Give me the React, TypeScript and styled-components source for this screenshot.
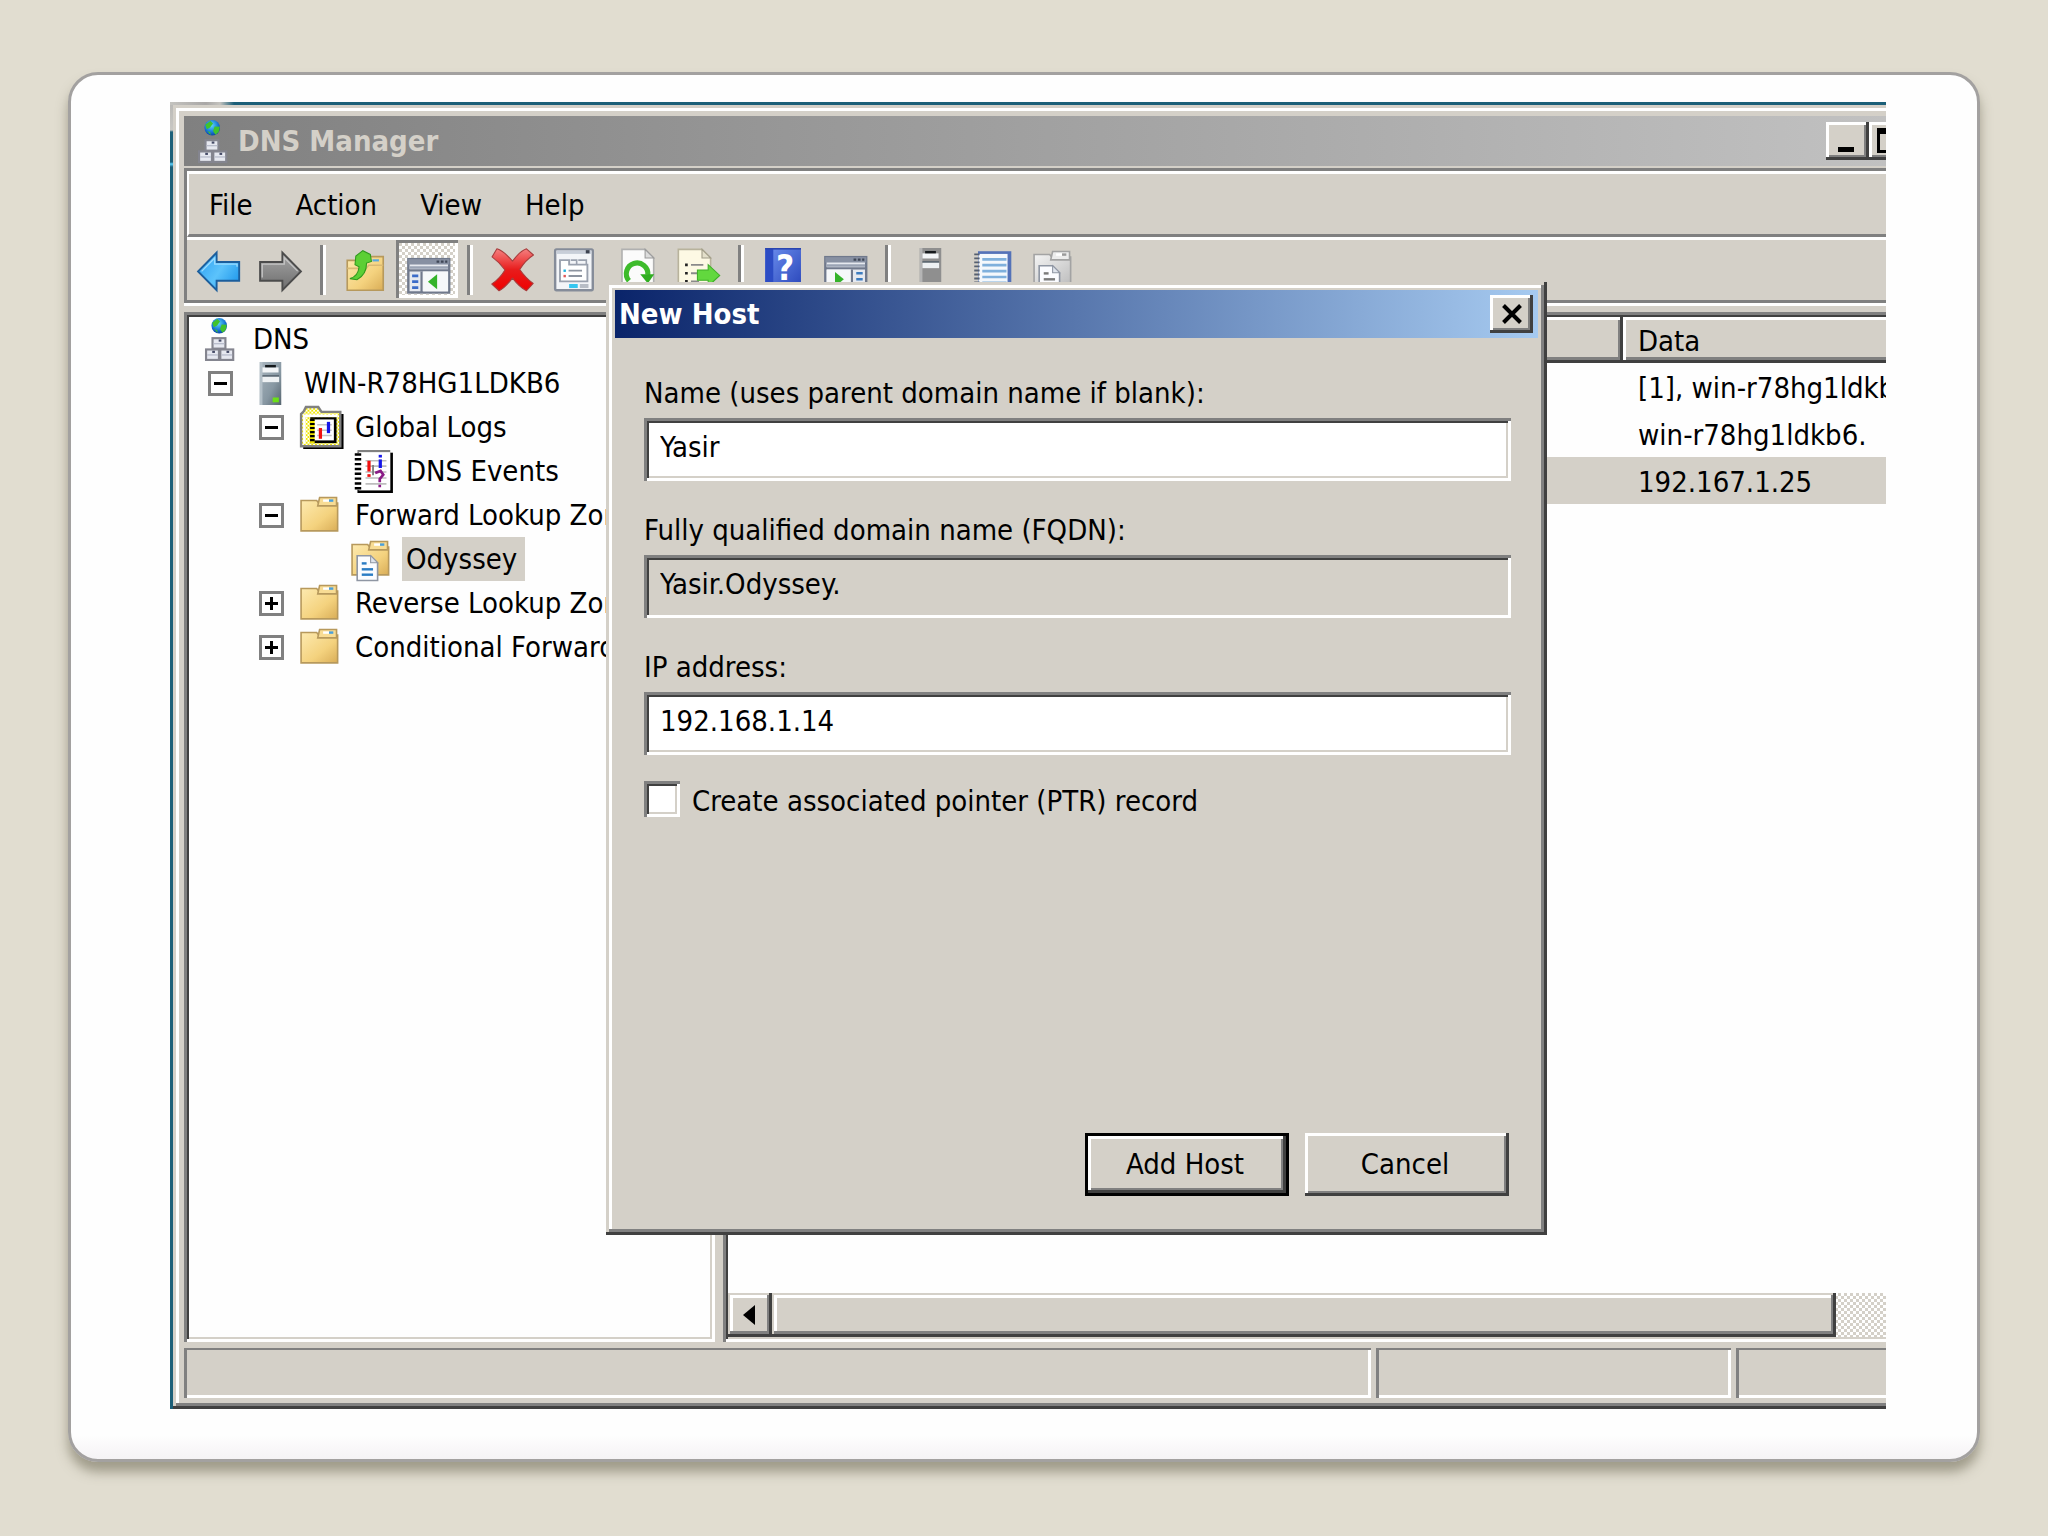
import React, { useState } from "react";
import styled, { createGlobalStyle, css } from "styled-components";

const face = "#d4d0c8";
const shade = "#808080";
const dark = "#404040";
const light = "#ffffff";

const GlobalStyle = createGlobalStyle`
  *, *::before, *::after { box-sizing: border-box; }
  html, body { margin: 0; padding: 0; background: #e1ddd0; }
  body, button, input, table {
    font-family: "DejaVu Sans Condensed", "DejaVu Sans", Tahoma, sans-serif;
    font-stretch: condensed;
    font-size: 29px;
    color: #000;
  }
  button, input { margin: 0; padding: 0; border: 0; border-radius: 0; }
`;

const raised = css`
  background: ${face};
  box-shadow: inset -3px -3px ${dark}, inset 3px 3px ${light}, inset -5px -5px ${shade};
`;

const sunken = css`
  box-shadow: inset 3px 3px ${shade}, inset -3px -3px ${light}, inset 5px 5px ${dark}, inset -5px -5px ${face};
`;

/* ---------- slide ---------- */

const Slide = styled.main`
  display: flex;
  min-height: 100vh;
  padding: 72px 68px 74px;
  background: #e1ddd0;
`;

const Card = styled.section`
  display: flex;
  flex: 1;
  min-width: 0;
  padding: 27px 91px 50px 99px;
  border: 3px solid #a3a1a0;
  border-radius: 30px;
  background: linear-gradient(to top, #f5f3f5 0, #fefefe 24px);
  box-shadow: 0 10px 12px rgba(95, 92, 70, 0.5);
`;

const Screen = styled.div`
  position: relative;
  display: flex;
  flex: 1;
  min-width: 0;
  overflow: hidden;
  padding: 3px 0 0 3px;
  background:
    linear-gradient(to right, #c4c3bf 0, #a9a7a6 36px, #c4c3bf 50px, transparent 64px) 0 0 / 64px 3px no-repeat,
    linear-gradient(to bottom, #b9b8b5 0, #c9c8c4 28px, #1c5f78 30px, #1c5f78 60px, #5fd4ff 62px, #1c5f78 65px) 0 0 / 3px 66px no-repeat,
    #1c5f78;
`;

/* ---------- main window ---------- */

const Window = styled.div`
  display: flex;
  flex: 1;
  flex-direction: column;
  min-width: 0;
  padding: 11px 0 11px 11px;
  background: ${face};
  box-shadow: inset 0 -3px ${dark}, inset 3px 3px ${face}, inset 0 -6px ${shade}, inset 6px 6px ${light};
`;

const TitleBar = styled.header`
  display: flex;
  align-items: center;
  height: 50px;
  padding-left: 7px;
  background: linear-gradient(to right, #808080, #c1c1c1);
`;

const WindowTitle = styled.h1`
  flex: 1;
  margin: 0 0 0 4px;
  font-size: 29px;
  line-height: 50px;
  font-weight: bold;
  color: ${face};
`;

const CaptionButtons = styled.div`
  display: flex;
  flex: none;
  width: 60px;
  overflow: hidden;
`;

const CaptionButton = styled.button`
  ${raised}
  display: flex;
  flex: none;
  align-items: center;
  justify-content: center;
  width: 43px;
  height: 38px;
`;

const Bands = styled.div`
  display: flex;
  flex-direction: column;
  margin-top: 2px;
  border-top: 3px solid ${shade};
  border-left: 3px solid ${shade};
`;

const MenuBar = styled.nav`
  display: flex;
  gap: 43px;
  height: 66px;
  padding-left: 20px;
  border-top: 3px solid ${light};
  border-left: 2px solid ${light};
  border-bottom: 3px solid ${shade};
`;

const MenuItem = styled.button`
  background: none;
  line-height: 62px;
`;

const ToolBar = styled.div`
  display: flex;
  height: 66px;
  border-top: 3px solid ${light};
  border-bottom: 3px solid ${shade};
`;

const ToolButton = styled.button<{ $pressed?: boolean }>`
  display: flex;
  flex: none;
  justify-content: center;
  width: 62px;
  height: 58px;
  padding-top: 8px;
  background: none;
  ${(p) =>
    p.$pressed &&
    css`
      padding: 10px 0 0 3px;
      background: conic-gradient(#fff 25%, ${face} 0 50%, #fff 0 75%, ${face} 0) 0 0 / 6px 6px;
      box-shadow: inset 3px 3px ${shade}, inset -3px -3px ${light};
    `}
`;

const ToolSeparator = styled.span`
  flex: none;
  width: 6px;
  height: 50px;
  margin: 5px 8px 0 9px;
  border-left: 3px solid ${shade};
  border-right: 3px solid ${light};
`;

const Panes = styled.div`
  display: grid;
  flex: 1;
  grid-template-columns: 531px minmax(0, 1fr);
  gap: 8px;
  min-height: 0;
  padding: 6px 0;
  border-top: 3px solid ${light};
`;

const TreePane = styled.div`
  ${sunken}
  padding: 5px;
  background-color: #fefefe;
`;

const TreeList = styled.ul`
  margin: 0;
  padding: 0;
  list-style: none;
`;

const TreeRow = styled.li<{ $level: number }>`
  display: flex;
  align-items: center;
  height: 44px;
  padding-left: ${(p) => (p.$level === 0 ? 9 : 51 * p.$level - 32)}px;
  white-space: nowrap;
`;

const ExpanderSlot = styled.span`
  display: flex;
  flex: none;
  width: 41px;
`;

const Expander = styled.button`
  display: flex;
  align-items: center;
  justify-content: center;
  width: 25px;
  height: 25px;
  border: 3px solid ${shade};
  background: #fff;
`;

const TreeLabel = styled.span<{ $selected?: boolean }>`
  margin-left: 8px;
  padding: 0 8px 0 4px;
  line-height: 44px;
  background: ${(p) => (p.$selected ? face : "transparent")};
`;

const ListPane = styled.div`
  display: flex;
  flex-direction: column;
  min-width: 0;
  padding: 5px 0 5px 5px;
  overflow: hidden;
  background: #fefefe;
  box-shadow: inset 3px 3px ${shade}, inset 0 -3px ${light}, inset 5px 5px ${dark}, inset 0 -5px ${face};
`;

const RecordTable = styled.table`
  width: 100%;
  table-layout: fixed;
  border-collapse: separate;
  border-spacing: 0;
`;

const HeaderCell = styled.th<{ $last?: boolean }>`
  width: ${(p) => (p.$last ? "263px" : "auto")};
  height: 46px;
  padding: 2px 0 0 15px;
  background: ${face};
  font-weight: normal;
  line-height: 44px;
  text-align: left;
  box-shadow: ${(p) =>
    p.$last
      ? `inset 0 -3px ${dark}, inset 3px 3px ${light}, inset 0 -6px ${shade}`
      : `inset -3px -3px ${dark}, inset 3px 3px ${light}, inset -5px -6px ${shade}`};
`;

const RecordRow = styled.tr<{ $selected?: boolean }>`
  background: ${(p) => (p.$selected ? face : "transparent")};
`;

const RecordCell = styled.td`
  height: 47px;
  padding: 3px 0 0 15px;
  overflow: hidden;
  line-height: 44px;
  white-space: nowrap;
`;

const ScrollBar = styled.div`
  display: flex;
  height: 44px;
  margin-top: auto;
  padding-right: 50px;
  background: conic-gradient(#fff 25%, ${face} 0 50%, #fff 0 75%, ${face} 0) 0 0 / 6px 6px;
`;

const scrollPart = css`
  background: ${face};
  box-shadow: inset -3px -3px ${dark}, inset 2px 2px ${face}, inset -5px -6px ${shade}, inset 5px 5px ${light};
`;

const ScrollButton = styled.button`
  ${scrollPart}
  display: flex;
  flex: none;
  align-items: center;
  justify-content: center;
  width: 44px;
  padding-right: 3px;
`;

const ScrollThumb = styled.div`
  ${scrollPart}
  flex: 1;
`;

const StatusBar = styled.footer`
  display: grid;
  grid-template-columns: minmax(0, 1fr) 355px 150px;
  gap: 5px;
  height: 50px;
`;

const StatusCell = styled.div<{ $open?: boolean }>`
  box-shadow: ${(p) =>
    p.$open
      ? `inset 3px 2px ${shade}, inset 0 -3px ${light}`
      : `inset 3px 2px ${shade}, inset -3px -3px ${light}`};
`;

/* ---------- dialog ---------- */

const Dialog = styled.form`
  position: absolute;
  top: 180px;
  left: 436px;
  display: flex;
  flex-direction: column;
  width: 941px;
  height: 953px;
  padding: 8px 9px;
  background: ${face};
  box-shadow: inset -3px -3px ${dark}, inset 3px 3px ${face}, inset -6px -6px ${shade}, inset 6px 6px ${light};
`;

const DialogTitleBar = styled.header`
  display: flex;
  align-items: center;
  justify-content: space-between;
  height: 48px;
  padding: 0 5px 0 4px;
  background: linear-gradient(to right, #0a246a, #a6caf0);
`;

const DialogTitle = styled.h2`
  margin: 0;
  font-size: 29px;
  line-height: 48px;
  font-weight: bold;
  color: #fff;
`;

const DialogBody = styled.div`
  display: flex;
  flex: 1;
  flex-direction: column;
  gap: 31px;
  padding: 37px 27px 31px 29px;
`;

const Field = styled.div`
  display: flex;
  flex-direction: column;
  gap: 7px;
`;

const FieldLabel = styled.label`
  line-height: 36px;
`;

const TextBox = styled.input`
  ${sunken}
  width: 100%;
  height: 63px;
  padding: 0 16px 6px;
  background: #fff;
  outline: none;

  &:read-only {
    background: ${face};
  }
`;

const CheckRow = styled.div`
  display: flex;
  gap: 12px;
  height: 40px;
  margin-top: -5px;
`;

const CheckBox = styled.input`
  ${sunken}
  flex: none;
  width: 36px;
  height: 36px;
  appearance: none;
  background: #fff;

  &:checked {
    background: linear-gradient(#000, #000) center / 14px 14px no-repeat #fff;
  }
`;

const CheckLabel = styled.label`
  line-height: 40px;
`;

const DialogButtons = styled.div`
  display: flex;
  justify-content: flex-end;
  gap: 16px;
  margin-top: auto;
  padding-right: 2px;
`;

const PushButton = styled.button<{ $default?: boolean }>`
  ${raised}
  width: 204px;
  height: 63px;
  padding-right: 4px;
  line-height: 63px;
  ${(p) =>
    p.$default &&
    css`
      box-shadow: inset 0 0 0 3px #000, inset -6px -6px ${dark}, inset 6px 6px ${light}, inset -8px -8px ${shade};
    `}
`;

/* ---------- icons, drawn on a 16 unit grid ---------- */

const Glyph = styled.svg`
  display: block;
  flex: none;
  width: 43px;
  height: 43px;
  overflow: visible;
`;

const Icon = ({ children }: { children: React.ReactNode }) => (
  <Glyph viewBox="0 0 16 16" aria-hidden="true">
    {children}
  </Glyph>
);

const HiddenDefs = styled.svg`
  position: absolute;
`;

const Defs = () => (
  <HiddenDefs width="0" height="0" aria-hidden="true">
    <defs>
      <linearGradient id="folder" x1="0" y1="0" x2="1" y2="1">
        <stop offset="0" stopColor="#fdeab0" />
        <stop offset="0.6" stopColor="#f4d27e" />
        <stop offset="1" stopColor="#d9ad57" />
      </linearGradient>
      <linearGradient id="folderGrey" x1="0" y1="0" x2="1" y2="1">
        <stop offset="0" stopColor="#f4f4f4" />
        <stop offset="1" stopColor="#bdbdbd" />
      </linearGradient>
      <linearGradient id="tower" x1="0" y1="0" x2="1" y2="1">
        <stop offset="0" stopColor="#a9b6bf" />
        <stop offset="0.6" stopColor="#8797a2" />
        <stop offset="1" stopColor="#56656f" />
      </linearGradient>
      <linearGradient id="blueArrow" x1="0" y1="0" x2="1" y2="0.6">
        <stop offset="0" stopColor="#2a9df0" />
        <stop offset="0.6" stopColor="#5cc3fb" />
        <stop offset="1" stopColor="#2a9fee" />
      </linearGradient>
      <linearGradient id="greyArrow" x1="0" y1="0" x2="0" y2="1">
        <stop offset="0" stopColor="#a6a6a6" />
        <stop offset="1" stopColor="#6d6d6d" />
      </linearGradient>
      <linearGradient id="redCross" x1="0" y1="0" x2="0" y2="1">
        <stop offset="0" stopColor="#f58080" />
        <stop offset="0.5" stopColor="#e81c1c" />
        <stop offset="1" stopColor="#f00000" />
      </linearGradient>
      <linearGradient id="book" x1="0" y1="0" x2="1" y2="1">
        <stop offset="0" stopColor="#6f92f0" />
        <stop offset="1" stopColor="#2743b8" />
      </linearGradient>
      <radialGradient id="globe" cx="0.45" cy="0.35" r="0.7">
        <stop offset="0" stopColor="#5fd8f5" />
        <stop offset="0.6" stopColor="#1878d8" />
        <stop offset="1" stopColor="#0a3c9a" />
      </radialGradient>
      <pattern id="yellowDither" width="1.4" height="1.4" patternUnits="userSpaceOnUse">
        <rect width="1.4" height="1.4" fill="#fff" />
        <rect width="0.7" height="0.7" fill="#f0e600" />
        <rect x="0.7" y="0.7" width="0.7" height="0.7" fill="#f0e600" />
      </pattern>
    </defs>
  </HiddenDefs>
);

const CabinetBox = ({ x, y }: { x: number; y: number }) => (
  <g>
    <rect x={x + 0.3} y={y + 0.3} width="4.8" height="3.9" fill="#e6e8f0" stroke="#84858f" strokeWidth="0.8" />
    <rect x={x + 0.7} y={y + 2.1} width="4" height="0.5" fill="#b9bdcc" />
    <rect x={x + 2.6} y={y + 0.8} width="1" height="0.8" fill="#444a66" />
  </g>
);

const DnsIcon = () => (
  <Icon>
    <circle cx="7.9" cy="2.9" r="2.9" fill="url(#globe)" />
    <path d="M5.3 1.8 7.2.4l1 .9-1.1 1.5-1.2.6zM8.8 2.4l1.9.1-.4 2-1.2 1-.9-1.4zM6 4l1.2.6.1 1z" fill="#41c22c" />
    <CabinetBox x={5.1} y={7.2} />
    <CabinetBox x={2.7} y={11.4} />
    <CabinetBox x={8.0} y={11.4} />
  </Icon>
);

const ServerIcon = ({ grey }: { grey?: boolean }) => (
  <Icon>
    <rect x="4" y="0" width="8" height="16" fill={grey ? "#8f8f8f" : "url(#tower)"} />
    <rect x="4" y="0" width="1" height="16" fill={grey ? "#b5b5b5" : "#b4c0c8"} />
    <rect x="5" y="2" width="6" height="1.9" fill="#f3f5f7" />
    <rect x="6" y="1.1" width="4" height="0.9" fill="#15191c" />
    <rect x="5" y="4.9" width="6.2" height="0.6" fill="#55626c" />
    <rect x="5" y="5.5" width="6.2" height="2" fill="#eef1f3" />
    {!grey && <rect x="8.8" y="13.2" width="2.3" height="1.8" fill="#6be016" />}
  </Icon>
);

const FolderShape = ({ grey }: { grey?: boolean }) => (
  <g strokeWidth="0.6" stroke={grey ? "#a3a3a3" : "#b7995c"}>
    <path d="M.4 2.4h5.8l.8 1h7v10.3H.4z" fill={grey ? "url(#folderGrey)" : "url(#folder)"} />
    <path d="M6.6 4.4 7.3 1.3h6.3v3.1z" fill={grey ? "#ececec" : "#f8dc94"} />
    <rect x="8.6" y="2" width="2.2" height="0.9" fill="#fff" stroke="none" />
    <rect x="10.8" y="2" width="1.6" height="0.9" fill={grey ? "#9a9a9a" : "#4aa0dc"} stroke="none" />
  </g>
);

const FolderIcon = () => (
  <Icon>
    <FolderShape />
  </Icon>
);

const ZoneIcon = ({ grey }: { grey?: boolean }) => {
  const ink = grey ? "#7a7a7a" : "#2b7cc4";
  return (
    <Icon>
      <FolderShape grey={grey} />
      <path d="M2.3 6.6h5l2.6 2.6v6.6H2.3z" fill="#fbfcff" stroke="#8f96a3" strokeWidth="0.6" />
      <path d="M7.3 6.6v2.6h2.6z" fill="#dfe4ec" stroke="#8f96a3" strokeWidth="0.4" />
      <rect x="4" y="9" width="1.8" height="0.9" fill={ink} />
      <rect x="4" y="11.2" width="4.2" height="0.9" fill={ink} />
      <rect x="4" y="13.2" width="4.2" height="0.9" fill={ink} />
    </Icon>
  );
};

const GlobalLogsIcon = () => (
  <Icon>
    <path d="M1.2 15.2h14V3h1v13H1.2z" fill="#000" />
    <path d="M.4 15V3l1-1 .8-1.6h4.6L8 2.2h7V15z" fill="url(#yellowDither)" stroke="#808080" strokeWidth="0.9" />
    <path d="M1.6 14V3.6h12.4" fill="none" stroke="#fff" strokeWidth="0.9" />
    <rect x="3.8" y="4.2" width="9.8" height="9.6" fill="#000" />
    <rect x="5" y="5" width="7.6" height="7.8" fill="#fff" />
    <path d="M4.6 4.8v9" stroke="#f0e600" strokeWidth="1.7" />
    <path d="M4.6 4.8v9" stroke="#000" strokeWidth="1.7" strokeDasharray="0.8 0.7" />
    <path d="M6.4 7h5.4M6.4 9h5.4M6.4 11h5.4" stroke="#c4c4c4" strokeWidth="0.6" />
    <rect x="7" y="8.2" width="1.2" height="4" fill="#f01010" />
    <rect x="10" y="5.9" width="1.2" height="4.2" fill="#1616e8" />
  </Icon>
);

const DnsEventsIcon = () => (
  <Icon>
    <rect x="2.4" y="1" width="13.2" height="15" fill="#000" />
    <rect x="2.4" y="0" width="12.2" height="15" fill="#808080" />
    <rect x="3" y="0.8" width="11.6" height="14.2" fill="#fff" />
    <path d="M2.6 1.2v13.6" stroke="#fff" strokeWidth="2.4" />
    <path d="M2.6 1.2v13.6" stroke="#000" strokeWidth="2.4" strokeDasharray="0.9 0.9" />
    <path d="M5.4 4h7.8M5.4 6h7.8M5.4 8.2h7.8M5.4 10.4h7.8M5.4 12.6h7.8" stroke="#bdbdbd" strokeWidth="0.6" />
    <rect x="6.1" y="4" width="1.2" height="4" fill="#f01010" />
    <rect x="6.1" y="9" width="1.2" height="1" fill="#f01010" />
    <path d="M8.2 5.6v3.8" stroke="#808080" strokeWidth="0.7" />
    <rect x="10.3" y="1.8" width="1.2" height="1" fill="#1616e8" />
    <rect x="10.3" y="3.5" width="1.2" height="3.2" fill="#1616e8" />
    <path d="M9 8.6l2-.8 1 1.4-1.3 1.6v1.2M10.7 12.9v1" stroke="#8a1c86" strokeWidth="1" fill="none" />
  </Icon>
);

const BackIcon = () => (
  <Icon>
    <path d="M.4 8.7 7.3 1.7v3.5h8.4v7H7.3v3.5z" fill="url(#blueArrow)" stroke="#1c5e9c" strokeWidth="0.7" />
    <path d="M1.7 8.7 6.6 3.7v2.3h8.3v1" fill="none" stroke="#9bdcff" strokeWidth="0.5" />
  </Icon>
);

const ForwardIcon = () => (
  <Icon>
    <path d="M15.6 8.7 8.7 1.7v3.5H.4v7h8.3v3.5z" fill="url(#greyArrow)" stroke="#4c4c4c" strokeWidth="0.7" />
    <path d="M1.2 11V6h8.2V3.6L14.4 8.6" fill="none" stroke="#c4c4c4" strokeWidth="0.5" />
  </Icon>
);

const UpFolderIcon = () => (
  <Icon>
    <path d="M1.2 4.6h4l.8-1.4h8.6V15.7H1.2z" fill="url(#folder)" stroke="#b7995c" strokeWidth="0.6" />
    <path d="M1.2 7.6h7l1-1.2h5.4" fill="none" stroke="#d9b974" strokeWidth="0.6" />
    <rect x="10.6" y="4.2" width="2.4" height="0.8" fill="#58a8e0" />
    <path d="M2.2 11.4c2.2-.6 3.2-2 3.4-4.4l-1.5-.8L4.4 3 7 1l2.8 1.4.4 2.6-1.8.6c0 4-2.4 5.6-3.6 6.2z" fill="#5ccf35" stroke="#2f9a1e" strokeWidth="0.4" />
  </Icon>
);

const ConsoleIcon = ({ flipped }: { flipped?: boolean }) => (
  <Icon>
    <rect x="0.5" y="3.4" width="15.2" height="12.4" fill="#e6e9ef" stroke="#70798c" strokeWidth="0.9" />
    <rect x="0.5" y="3.4" width="15.2" height="2" fill="#8790a2" />
    <path d="M1 6.5h14.3" stroke="#9aa3b4" strokeWidth="0.9" />
    <path d="M11 4.3h1M12.6 4.3h1M14.2 4.3h.8" stroke="#3f4656" strokeWidth="0.8" />
    <path d="M.5 7.6h15.2" stroke="#70798c" strokeWidth="0.8" />
    {flipped ? (
      <g>
        <rect x="1" y="8" width="9" height="7.4" fill="#f6f8fa" />
        <path d="M10.4 8v7.6" stroke="#70798c" strokeWidth="0.8" />
        <path d="M4.1 8.9v5.4L7.4 11.6z" fill="#35b32a" />
        <path d="M12 9.4h2.4M12 11.6h2.4M12 13.8h2.4" stroke="#3c7cc0" strokeWidth="0.9" />
      </g>
    ) : (
      <g>
        <rect x="6" y="8" width="9.3" height="7.4" fill="#f6f8fa" />
        <path d="M5.4 8v7.6" stroke="#70798c" strokeWidth="0.8" />
        <path d="M11.2 9v5.6L7.8 11.8z" fill="#35b32a" />
        <path d="M1.9 9.6h2.3M1.9 11.8h2.3M1.9 14h2.3" stroke="#3c6cc8" strokeWidth="1" />
      </g>
    )}
  </Icon>
);

const DeleteIcon = () => (
  <Icon>
    <path
      d="M2.2.3C4.4 1 6.4 3 8 4.9 9.4 3 11.2 1 13.2.3L15.8 2.6C13.6 4 11.9 6 10.7 8c1.4 2 3 3.8 5 5.2L13.2 15.9C11 14.8 9.4 13 8 11.2 6.6 13 5 14.9 3 15.9L.3 13.4C2.4 12 4 10.2 5.2 8.2 3.8 6.200 2.2 4.6.4 3.300z"
      fill="url(#redCross)"
      stroke="#a83c3c"
      strokeWidth="0.4"
      strokeLinejoin="round"
    />
  </Icon>
);

const PropertiesIcon = () => (
  <Icon>
    <rect x="0.8" y="0.5" width="14" height="15.2" rx="0.5" fill="#f3f5f8" stroke="#858c99" strokeWidth="0.9" />
    <rect x="1.3" y="1" width="13" height="1.2" fill="#c8ced8" />
    <rect x="12.2" y="0.8" width="1.4" height="1.2" fill="#3d4350" />
    <path d="M2.6 4.5h3.4v1.7h6.8V12.4H2.6z" fill="#fff" stroke="#9aa1ae" strokeWidth="0.7" />
    <path d="M6.6 4.5h2.2v1.5M9.4 4.5h3v1.5" fill="none" stroke="#9aa1ae" strokeWidth="0.6" />
    <rect x="3.9" y="8" width="0.9" height="0.9" fill="#20b4e0" />
    <rect x="3.9" y="10" width="0.9" height="0.9" fill="#e05a5a" />
    <path d="M5.8 8.4h5M5.8 10.4h5" stroke="#8d94a0" strokeWidth="0.7" />
    <rect x="6" y="13.4" width="3.2" height="1.5" fill="#35c6f0" />
    <rect x="10" y="13.4" width="3.2" height="1.5" fill="#b8bdc6" />
  </Icon>
);

const RefreshIcon = () => (
  <Icon>
    <path d="M2.6.5h8.6l3.2 3.2v12H2.6z" fill="#fbfbfb" stroke="#b0b0b0" strokeWidth="0.6" />
    <path d="M11.2.5v3.2h3.2z" fill="#dcdcdc" stroke="#9a9a9a" strokeWidth="0.4" />
    <path d="M5.2 12.2A4 4 0 1 1 12.2 10" fill="none" stroke="#3dbb2b" strokeWidth="1.9" />
    <path d="M9.4 9.8h5.2l-2.4 3.4z" fill="#2fae20" />
  </Icon>
);

const ExportIcon = () => (
  <Icon>
    <path d="M.5.5h8.8l3.2 3.2v12H.5z" fill="#fdf9e4" stroke="#b8b39c" strokeWidth="0.6" />
    <path d="M9.3.5v3.2h3.2z" fill="#e3dfca" stroke="#a09c88" strokeWidth="0.4" />
    <path d="M3 6.3h1M3 9.4h1M3 12.4h1" stroke="#222" strokeWidth="1" />
    <path d="M5.2 6.3h4.6M5.2 9.4h2.4M5.2 12.4h3" stroke="#8a8a8a" strokeWidth="0.7" />
    <path d="M7.6 8.2h4V6.2l4.3 4-4.3 4v-2.2h-4z" fill="#62d83e" stroke="#3fae28" strokeWidth="0.4" />
  </Icon>
);

const HelpMark = styled.text`
  font-family: "DejaVu Sans", sans-serif;
  font-size: 13px;
  font-weight: bold;
  fill: #fff;
`;

const HelpIcon = () => (
  <Icon>
    <rect x="1.2" y="0" width="13.3" height="16" fill="url(#book)" />
    <rect x="1.2" y="0" width="3" height="16" fill="#2c4cc4" />
    <rect x="1.2" y="0" width="13.3" height="0.6" fill="#2a45b0" />
    <HelpMark x="5.2" y="12">?</HelpMark>
  </Icon>
);

const NotebookIcon = () => (
  <Icon>
    <rect x="2.6" y="1.2" width="12.4" height="14.6" fill="#5472b8" />
    <rect x="2.8" y="2.2" width="10.8" height="13.6" fill="#f4f8fc" />
    <path d="M4.2 4.2h9M4.2 6.4h9M4.2 8.6h9M4.2 10.8h9M4.2 13h9" stroke="#7fb0dc" strokeWidth="1" />
    <path d="M2.2 2v13.6" stroke="#555f70" strokeWidth="2" strokeDasharray="0.7 0.8" />
  </Icon>
);

/* ---------- content ---------- */

type TreeItem = {
  label: string;
  level: number;
  icon: React.ReactNode;
  toggle?: "open" | "closed";
  selected?: boolean;
};

const treeItems: TreeItem[] = [
  { label: "DNS", level: 0, icon: <DnsIcon /> },
  { label: "WIN-R78HG1LDKB6", level: 1, icon: <ServerIcon />, toggle: "open" },
  { label: "Global Logs", level: 2, icon: <GlobalLogsIcon />, toggle: "open" },
  { label: "DNS Events", level: 3, icon: <DnsEventsIcon /> },
  { label: "Forward Lookup Zones", level: 2, icon: <FolderIcon />, toggle: "open" },
  { label: "Odyssey", level: 3, icon: <ZoneIcon />, selected: true },
  { label: "Reverse Lookup Zones", level: 2, icon: <FolderIcon />, toggle: "closed" },
  { label: "Conditional Forwarders", level: 2, icon: <FolderIcon />, toggle: "closed" },
];

type Tool = { name: string; icon: React.ReactNode; pressed?: boolean };

const toolGroups: Tool[][] = [
  [
    { name: "Back", icon: <BackIcon /> },
    { name: "Forward", icon: <ForwardIcon /> },
  ],
  [
    { name: "Up one level", icon: <UpFolderIcon /> },
    { name: "Show console tree", icon: <ConsoleIcon />, pressed: true },
  ],
  [
    { name: "Delete", icon: <DeleteIcon /> },
    { name: "Properties", icon: <PropertiesIcon /> },
    { name: "Refresh", icon: <RefreshIcon /> },
    { name: "Export list", icon: <ExportIcon /> },
  ],
  [
    { name: "Help", icon: <HelpIcon /> },
    { name: "Show action pane", icon: <ConsoleIcon flipped /> },
  ],
  [
    { name: "New server", icon: <ServerIcon grey /> },
    { name: "Record list", icon: <NotebookIcon /> },
    { name: "New zone", icon: <ZoneIcon grey /> },
  ],
];

const records = [
  { data: "[1], win-r78hg1ldkb" },
  { data: "win-r78hg1ldkb6." },
  { data: "192.167.1.25", selected: true },
];

const ExpanderSign = ({ state }: { state: "open" | "closed" }) => (
  <svg width="15" height="15" viewBox="0 0 15 15" aria-hidden="true">
    <path d={state === "open" ? "M1 7.5h13" : "M1 7.5h13M7.5 1v13"} stroke="#000" strokeWidth="3" />
  </svg>
);

const NewHostDialog = () => {
  const [name, setName] = useState("Yasir");
  const [ip, setIp] = useState("192.168.1.14");
  const [pointer, setPointer] = useState(false);

  return (
    <Dialog role="dialog" aria-labelledby="dialog-title" onSubmit={(e) => e.preventDefault()}>
      <DialogTitleBar>
        <DialogTitle id="dialog-title">New Host</DialogTitle>
        <CaptionButton type="button" aria-label="Close">
          <svg width="22" height="20" viewBox="0 0 22 20" aria-hidden="true">
            <path d="M2.5 1.5 19.5 18.5M19.5 1.5 2.5 18.5" stroke="#000" strokeWidth="4" />
          </svg>
        </CaptionButton>
      </DialogTitleBar>
      <DialogBody>
        <Field>
          <FieldLabel htmlFor="host-name">Name (uses parent domain name if blank):</FieldLabel>
          <TextBox id="host-name" type="text" value={name} onChange={(e) => setName(e.target.value)} />
        </Field>
        <Field>
          <FieldLabel htmlFor="host-fqdn">Fully qualified domain name (FQDN):</FieldLabel>
          <TextBox id="host-fqdn" type="text" value={`${name}.Odyssey.`} readOnly />
        </Field>
        <Field>
          <FieldLabel htmlFor="host-ip">IP address:</FieldLabel>
          <TextBox id="host-ip" type="text" value={ip} onChange={(e) => setIp(e.target.value)} />
        </Field>
        <CheckRow>
          <CheckBox
            id="host-ptr"
            type="checkbox"
            checked={pointer}
            onChange={(e) => setPointer(e.target.checked)}
          />
          <CheckLabel htmlFor="host-ptr">Create associated pointer (PTR) record</CheckLabel>
        </CheckRow>
        <DialogButtons>
          <PushButton type="submit" $default>
            Add Host
          </PushButton>
          <PushButton type="button">Cancel</PushButton>
        </DialogButtons>
      </DialogBody>
    </Dialog>
  );
};

export default function App() {
  return (
    <>
      <GlobalStyle />
      <Defs />
      <Slide>
        <Card>
          <Screen>
            <Window>
              <TitleBar>
                <DnsIcon />
                <WindowTitle>DNS Manager</WindowTitle>
                <CaptionButtons>
                  <CaptionButton type="button" aria-label="Minimize">
                    <svg width="22" height="22" viewBox="0 0 22 22" aria-hidden="true">
                      <path d="M1 17h16v6H1z" fill="#000" />
                    </svg>
                  </CaptionButton>
                  <CaptionButton type="button" aria-label="Maximize">
                    <svg width="27" height="26" viewBox="0 0 27 26" aria-hidden="true">
                      <path d="M0 0h25v25H0zM3 6v16h19V6z" fill="#000" fillRule="evenodd" />
                    </svg>
                  </CaptionButton>
                </CaptionButtons>
              </TitleBar>

              <Bands>
                <MenuBar>
                  {["File", "Action", "View", "Help"].map((item) => (
                    <MenuItem key={item} type="button">
                      {item}
                    </MenuItem>
                  ))}
                </MenuBar>
                <ToolBar>
                  {toolGroups.map((group, index) => (
                    <React.Fragment key={index}>
                      {index > 0 && <ToolSeparator />}
                      {group.map((tool) => (
                        <ToolButton key={tool.name} type="button" aria-label={tool.name} $pressed={tool.pressed}>
                          {tool.icon}
                        </ToolButton>
                      ))}
                    </React.Fragment>
                  ))}
                </ToolBar>
              </Bands>

              <Panes>
                <TreePane>
                  <TreeList>
                    {treeItems.map((item) => (
                      <TreeRow key={item.label} $level={item.level}>
                        {item.level > 0 && (
                          <ExpanderSlot>
                            {item.toggle && (
                              <Expander type="button" aria-label={`Toggle ${item.label}`}>
                                <ExpanderSign state={item.toggle} />
                              </Expander>
                            )}
                          </ExpanderSlot>
                        )}
                        {item.icon}
                        <TreeLabel $selected={item.selected}>{item.label}</TreeLabel>
                      </TreeRow>
                    ))}
                  </TreeList>
                </TreePane>

                <ListPane>
                  <RecordTable>
                    <thead>
                      <tr>
                        <HeaderCell scope="col" />
                        <HeaderCell scope="col" $last>
                          Data
                        </HeaderCell>
                      </tr>
                    </thead>
                    <tbody>
                      {records.map((record) => (
                        <RecordRow key={record.data} $selected={record.selected}>
                          <RecordCell />
                          <RecordCell>{record.data}</RecordCell>
                        </RecordRow>
                      ))}
                    </tbody>
                  </RecordTable>
                  <ScrollBar>
                    <ScrollButton type="button" aria-label="Scroll left">
                      <svg width="12" height="20" viewBox="0 0 12 20" aria-hidden="true">
                        <path d="M12 0v20L0 10z" fill="#000" />
                      </svg>
                    </ScrollButton>
                    <ScrollThumb />
                  </ScrollBar>
                </ListPane>
              </Panes>

              <StatusBar>
                <StatusCell />
                <StatusCell />
                <StatusCell $open />
              </StatusBar>
            </Window>

            <NewHostDialog />
          </Screen>
        </Card>
      </Slide>
    </>
  );
}
